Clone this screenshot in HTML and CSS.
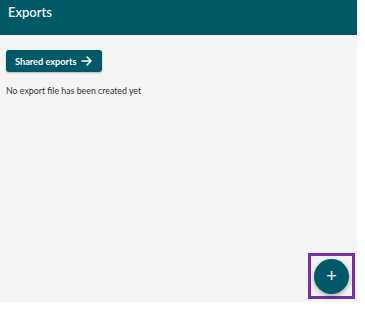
FILE: index.html
```html
<!DOCTYPE html>
<html lang="en">
<head>
  <meta charset="UTF-8">
  <meta name="viewport" content="width=device-width, initial-scale=1.0">
  <title>Exports</title>
  <link rel="stylesheet" href="styles.css">
</head>
<body>
  <div class="app">
    <header class="topbar">
      <h1>Exports</h1>
    </header>

    <main class="content">
      <button class="shared-btn">
        Shared exports
        <svg width="11" height="10" viewBox="0 0 11 10" fill="none" stroke="white" stroke-width="1.6" stroke-linecap="round" stroke-linejoin="round">
          <path d="M1 5h9M6 1l4 4-4 4"/>
        </svg>
      </button>
      <p class="empty">No export file has been created yet</p>
    </main>

    <div class="fab-wrap">
      <button class="fab">+</button>
    </div>
  </div>
</body>
</html>
```

FILE: styles.css
```css
body {
  margin: 0;
  font-family: Lato, "Open Sans", sans-serif;
  background: white;
}
.app {
  position: relative;
  width: 357px;
  height: 302px;
  background-color: #f4f4f4;
}
.topbar {
  height: 35px;
  background-color: #015867;
  border-bottom: 1px solid #0e4a55;
  box-sizing: border-box;
  padding: 4px 8px;
}
.topbar h1 {
  margin: 0;
  color: white;
  font-size: 13px;
  font-weight: 500;
  line-height: 16px;
}
.content {
  padding: 15px 6px;
}
.shared-btn {
  display: flex;
  align-items: center;
  gap: 5px;
  height: 22px;
  padding: 0 10px 0 9px;
  white-space: nowrap;
  background-color: #015867;
  color: white;
  border: none;
  border-radius: 3px;
  font-family: inherit;
  font-size: 9.2px;
  font-weight: 700;
  box-shadow: 0 1px 2px rgba(0,0,0,0.25);
}
.empty {
  margin: 13px 0 0;
  font-size: 8.8px;
  color: #333;
}
.fab-wrap {
  position: absolute;
  left: 308px;
  top: 253px;
  width: 47px;
  height: 46px;
  box-sizing: border-box;
  border: 3px solid #7430a4;
  display: flex;
  align-items: center;
  justify-content: center;
}
.fab {
  width: 35px;
  height: 35px;
  border-radius: 50%;
  border: none;
  background-color: #015867;
  color: white;
  font-family: Arial, sans-serif;
  font-size: 18px;
  line-height: 1;
  padding: 0;
  box-shadow: 0 2px 5px rgba(0,0,0,0.3);
}
```
